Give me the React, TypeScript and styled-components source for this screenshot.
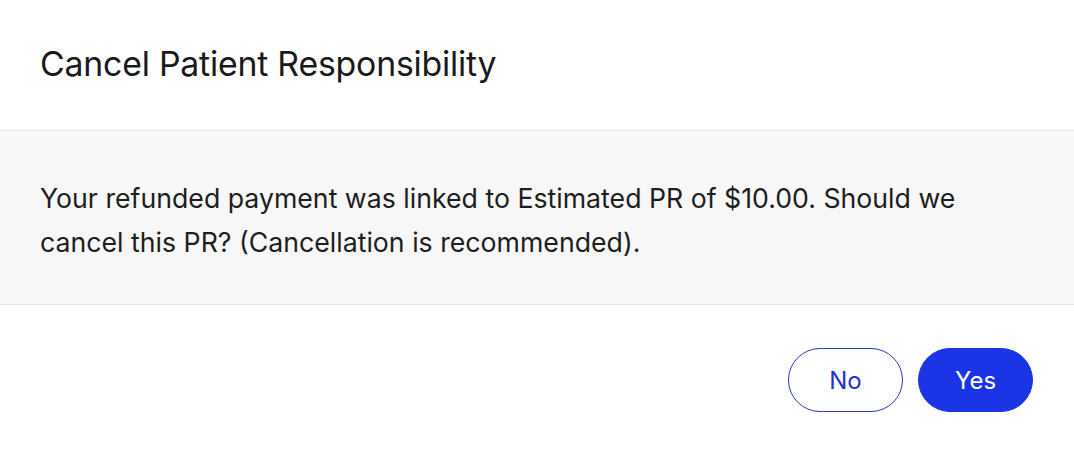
import React from 'react';
import styled, { createGlobalStyle } from 'styled-components';

const GlobalStyle = createGlobalStyle`
  html, body {
    margin: 0;
    padding: 0;
    background: #ffffff;
  }
  body {
    font-family: Inter, "Noto Sans", sans-serif;
    color: #1c1c1c;
  }
`;

export const Modal = styled.div`
  width: 1074px;
  height: 450px;
  background: #ffffff;
  display: flex;
  flex-direction: column;
`;

export const Header = styled.div`
  height: 131px;
  box-sizing: border-box;
  padding: 0 40px;
  display: flex;
  align-items: center;
  padding-bottom: 4px;
  border-bottom: 1px solid #e4e4e4;
`;

export const Title = styled.h2`
  margin: 0;
  font-size: 33.8px;
  font-weight: 400;
  letter-spacing: -0.2px;
  color: #1a1a1a;
`;

export const Body = styled.div`
  height: 174px;
  box-sizing: border-box;
  background: #f7f7f7;
  border-bottom: 1px solid #e4e4e4;
  padding: 0 40px;
  padding-top: 4px;
  display: flex;
  align-items: center;
`;

export const Message = styled.p`
  margin: 0;
  font-size: 26.7px;
  line-height: 44px;
  max-width: 960px;
  color: #1e1e1e;
`;

export const Footer = styled.div`
  display: flex;
  justify-content: flex-end;
  gap: 15px;
  padding: 43px 41px 0 0;
`;

export const ActionButton = styled.button<{ $primary?: boolean }>`
  width: 115px;
  height: 64px;
  border-radius: 32px;
  font-family: Inter, "Noto Sans", sans-serif;
  font-size: 24px;
  font-weight: 400;
  cursor: pointer;
  border: 1px solid ${p => (p.$primary ? '#1b35e6' : '#2a3bb5')};
  background: ${p => (p.$primary ? '#1b35e6' : '#ffffff')};
  color: ${p => (p.$primary ? '#ffffff' : '#1f33c8')};
`;

export default function App() {
  return (
    <>
      <GlobalStyle />
      <Modal>
        <Header>
          <Title>Cancel Patient Responsibility</Title>
        </Header>
        <Body>
          <Message>
            Your refunded payment was linked to Estimated PR of $10.00. Should we cancel this PR? (Cancellation is recommended).
          </Message>
        </Body>
        <Footer>
          <ActionButton>No</ActionButton>
          <ActionButton $primary>Yes</ActionButton>
        </Footer>
      </Modal>
    </>
  );
}
